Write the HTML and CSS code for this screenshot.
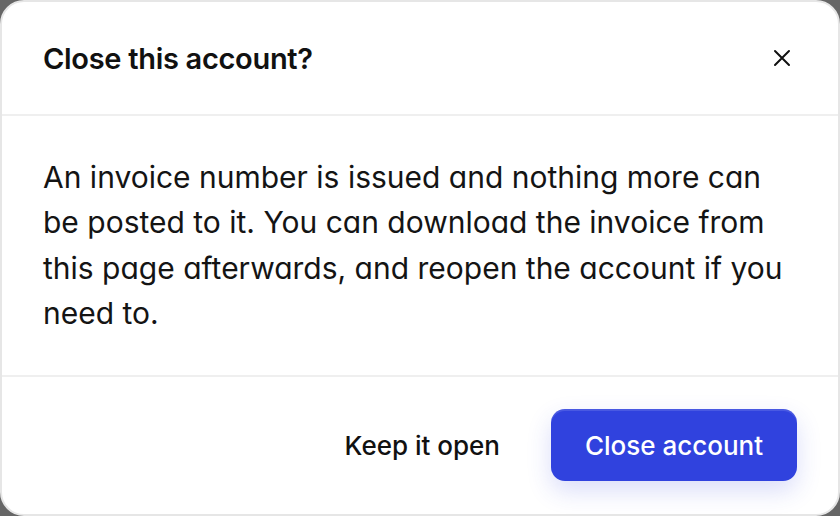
FILE: index.html
```html
<!DOCTYPE html>
<html lang="en">
<head>
<meta charset="utf-8">
<title>Close this account?</title>
<link rel="stylesheet" href="styles.css">
</head>
<body>
<div class="dialog" role="dialog" aria-labelledby="dlg-title">
  <header class="dialog-header">
    <h2 id="dlg-title" class="dialog-title">Close this account?</h2>
    <button class="icon-btn" aria-label="Close">
      <svg width="18" height="18" viewBox="0 0 18 18" fill="none" stroke="#111" stroke-width="2" stroke-linecap="round"><path d="M2 2L16 16M16 2L2 16"/></svg>
    </button>
  </header>
  <div class="dialog-body">
    <p>An invoice number is issued and nothing more can be posted to it. You can download the invoice from this page afterwards, and reopen the account if you need to.</p>
  </div>
  <footer class="dialog-footer">
    <button class="btn btn-ghost">Keep it open</button>
    <button class="btn btn-primary">Close account</button>
  </footer>
</div>
</body>
</html>
```

FILE: styles.css
```css
* { box-sizing: border-box; }
html, body { margin: 0; padding: 0; height: 100%; }
body {
  background: #666666;
  font-family: Inter, "Liberation Sans", sans-serif;
  color: #111111;
}
.dialog {
  width: 840px;
  height: 516px;
  background: #ffffff;
  border: 2px solid #e6e6e6;
  border-radius: 24px;
  display: flex;
  flex-direction: column;
  overflow: hidden;
}
.dialog-header {
  display: flex;
  align-items: center;
  justify-content: space-between;
  height: 114px;
  padding: 0 41px;
  border-bottom: 2px solid #efefef;
  flex: none;
}
.dialog-title {
  margin: 0;
  font-size: 29px;
  font-weight: 600;
  letter-spacing: -0.3px;
  color: #111111;
}
.icon-btn {
  width: 30px;
  height: 30px;
  padding: 0;
  border: 0;
  background: transparent;
  display: flex;
  align-items: center;
  justify-content: center;
}
.dialog-body {
  padding: 39px 41px 38px;
  border-bottom: 2px solid #efefef;
  flex: none;
}
.dialog-body p {
  margin: 0;
  max-width: 748px;
  font-size: 30px;
  line-height: 45.4px;
  font-feature-settings: "cv11";
  color: #141414;
}
.dialog-footer {
  flex: 1;
  display: flex;
  align-items: center;
  justify-content: flex-end;
  gap: 22px;
  padding: 0 41px;
}
.btn {
  font-family: Inter, "Liberation Sans", sans-serif;
  font-size: 26px;
  border: 0;
  height: 72px;
  border-radius: 14px;
  padding: 0;
  white-space: nowrap;
  cursor: pointer;
}
.btn-ghost {
  background: transparent;
  color: #111111;
  font-weight: 500;
  padding: 0 29px;
}
.btn-primary {
  width: 246px;
  background: #3042de;
  color: #ffffff;
  font-weight: 500;
  box-shadow: 0 10px 24px rgba(48, 66, 222, 0.18), inset 0 2px 0 rgba(255,255,255,0.12);
}
```
